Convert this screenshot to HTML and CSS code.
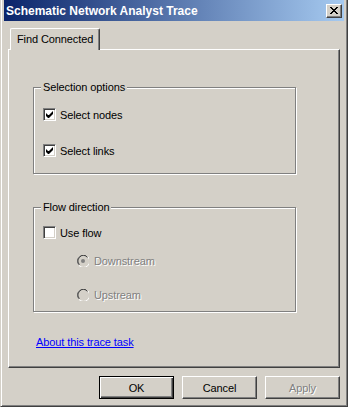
FILE: index.html
```html
<!DOCTYPE html>
<html lang="en">
<head>
    <meta charset="UTF-8">
    <title>Schematic Network Analyst Trace</title>
    <link rel="stylesheet" href="styles.css">
</head>
<body>
    <div class="window">
        <div class="titlebar">
            <span class="title">Schematic Network Analyst Trace</span>
            <span class="close-btn">
                <svg width="8" height="7" viewBox="0 0 8 7"><path d="M0 0h2v1h1v1h2v-1h1v-1h2v1h-1v1h-1v1h-1v1h1v1h1v1h1v1h-2v-1h-1v-1h-2v1h-1v1h-2v-1h1v-1h1v-1h1v-1h-1v-1h-1v-1h-1z" fill="#000"/></svg>
            </span>
        </div>

        <div class="client">
            <div class="tabs">
                <div class="tab active">Find Connected</div>
            </div>

            <div class="tab-panel">
                <fieldset class="group">
                    <legend>Selection options</legend>
                    <label class="check-row">
                        <span class="checkbox checked">
                            <svg width="7" height="7" viewBox="0 0 7 7"><path d="M0 2v3l2 2h1l4-4v-3l-4 4h-1z" fill="#000"/></svg>
                        </span>
                        Select nodes
                    </label>
                    <label class="check-row">
                        <span class="checkbox checked">
                            <svg width="7" height="7" viewBox="0 0 7 7"><path d="M0 2v3l2 2h1l4-4v-3l-4 4h-1z" fill="#000"/></svg>
                        </span>
                        Select links
                    </label>
                </fieldset>

                <fieldset class="group flow">
                    <legend>Flow direction</legend>
                    <label class="check-row">
                        <span class="checkbox"></span>
                        Use flow
                    </label>
                    <label class="radio-row disabled">
                        <svg class="radio" width="12" height="12" viewBox="0 0 12 12">
                            <path d="M10 2A5.5 5.5 0 0 0 2 2 5.5 5.5 0 0 0 2 10" fill="none" stroke="#808080" stroke-width="1"/>
                            <path d="M10.5 2.5A4.6 4.6 0 0 0 2.5 2.5 4.6 4.6 0 0 0 2.5 9.5" fill="none" stroke="#404040" stroke-width="1"/>
                            <path d="M11 2A5.5 5.5 0 0 1 2 10.5" fill="none" stroke="#fff" stroke-width="1"/>
                            <circle cx="6" cy="6" r="2" fill="#808080"/>
                        </svg>
                        Downstream
                    </label>
                    <label class="radio-row disabled">
                        <svg class="radio" width="12" height="12" viewBox="0 0 12 12">
                            <path d="M10 2A5.5 5.5 0 0 0 2 2 5.5 5.5 0 0 0 2 10" fill="none" stroke="#808080" stroke-width="1"/>
                            <path d="M10.5 2.5A4.6 4.6 0 0 0 2.5 2.5 4.6 4.6 0 0 0 2.5 9.5" fill="none" stroke="#404040" stroke-width="1"/>
                            <path d="M11 2A5.5 5.5 0 0 1 2 10.5" fill="none" stroke="#fff" stroke-width="1"/>
                        </svg>
                        Upstream
                    </label>
                </fieldset>

                <a class="help-link" href="#">About this trace task</a>
            </div>

            <div class="button-row">
                <button class="btn default">OK</button>
                <button class="btn">Cancel</button>
                <button class="btn" disabled>Apply</button>
            </div>
        </div>
    </div>
</body>
</html>
```

FILE: styles.css
```css
:root {
    --face: #d4d0c8;
    --shadow: #808080;
    --dark: #404040;
    --light: #ffffff;
}

* {
    box-sizing: border-box;
}

html, body {
    margin: 0;
    padding: 0;
    background: var(--face);
}

body {
    width: 348px;
    height: 407px;
    overflow: hidden;
    font-family: "Liberation Sans", Arial, sans-serif;
    font-size: 11px;
    letter-spacing: -0.1px;
    color: #000;
}

/* Window frame (top edge is cropped off in the capture) */
.window {
    width: 348px;
    height: 407px;
    border-left: 1px solid var(--face);
    border-right: 1px solid var(--dark);
    border-bottom: 1px solid var(--dark);
    box-shadow: inset 1px 0 0 var(--light), inset -1px -1px 0 var(--shadow);
    padding: 0 3px 3px 3px;
    display: flex;
    flex-direction: column;
}

.titlebar {
    height: 21px;
    flex: none;
    display: flex;
    align-items: center;
    justify-content: space-between;
    padding: 0 2px 0 2px;
    background: linear-gradient(to right, #0a246a, #a6caf0);
}

.title {
    color: #fff;
    font-weight: bold;
    font-size: 12px;
    letter-spacing: 0;
}

.close-btn {
    width: 16px;
    height: 14px;
    display: flex;
    align-items: center;
    justify-content: center;
    background: var(--face);
    border: 1px solid;
    border-color: var(--light) var(--dark) var(--dark) var(--light);
    box-shadow: inset -1px -1px 0 var(--shadow);
}

.client {
    flex: 1;
    display: flex;
    flex-direction: column;
    padding: 7px 4px 0 4px;
}

/* Tabs */
.tabs {
    display: flex;
    height: 21px;
    padding-left: 2px;
}

.tab {
    padding: 4px 6px 0 6px;
    border: 1px solid var(--light);
    border-bottom: none;
    border-right: 1px solid var(--dark);
    border-radius: 2px 2px 0 0;
    box-shadow: inset -1px 0 0 var(--shadow);
    height: 22px;
    background: var(--face);
    z-index: 1;
}

.tab-panel {
    height: 319px;
    border: 1px solid;
    border-color: var(--light) var(--dark) var(--dark) var(--light);
    box-shadow: inset -1px -1px 0 var(--shadow);
    padding: 31px 0 0 24px;
}

.group {
    width: 263px;
    height: 93px;
    margin: 0;
    padding: 0 0 0 9px;
    border: 1px solid var(--shadow);
    box-shadow: 1px 1px 0 var(--light), inset 1px 1px 0 var(--light);
}

.group legend {
    padding: 0 2px;
    margin-left: -2px;
    background: var(--face);
}

.group.flow {
    height: 111px;
    margin-top: 27px;
}

.check-row, .radio-row {
    display: flex;
    align-items: center;
    gap: 4px;
    height: 13px;
}

.group .check-row:first-of-type {
    margin-top: 15px;
}

.group .check-row + .check-row {
    margin-top: 23px;
}

.flow .check-row:first-of-type {
    margin-top: 13px;
}

.checkbox {
    width: 13px;
    height: 13px;
    flex: none;
    display: flex;
    align-items: center;
    justify-content: center;
    background: #fff;
    border: 1px solid;
    border-color: var(--shadow) var(--light) var(--light) var(--shadow);
    box-shadow: inset 1px 1px 0 var(--dark), inset -1px -1px 0 var(--face);
}

.radio-row {
    margin-left: 34px;
    gap: 5px;
    height: 12px;
}

.radio-row + .radio-row {
    margin-top: 22px;
}

.check-row + .radio-row {
    margin-top: 16px;
}

.disabled {
    color: var(--shadow);
    text-shadow: 1px 1px 0 var(--light);
}

.help-link {
    display: inline-block;
    margin: 24px 0 0 3px;
    color: #0000ff;
    text-decoration: underline;
}

/* Dialog buttons */
.button-row {
    display: flex;
    justify-content: flex-end;
    gap: 8px;
    padding: 8px 0 0 0;
}

.btn {
    width: 75px;
    height: 23px;
    padding: 0;
    font-family: inherit;
    font-size: 11px;
    letter-spacing: inherit;
    color: #000;
    background: var(--face);
    border: 1px solid;
    border-color: var(--light) var(--dark) var(--dark) var(--light);
    box-shadow: inset -1px -1px 0 var(--shadow);
}

.btn.default {
    border: 1px solid #000;
    box-shadow: inset 1px 1px 0 var(--light), inset -1px -1px 0 var(--dark), inset -2px -2px 0 var(--shadow);
}

.btn:disabled {
    color: var(--shadow);
    text-shadow: 1px 1px 0 var(--light);
}
```
